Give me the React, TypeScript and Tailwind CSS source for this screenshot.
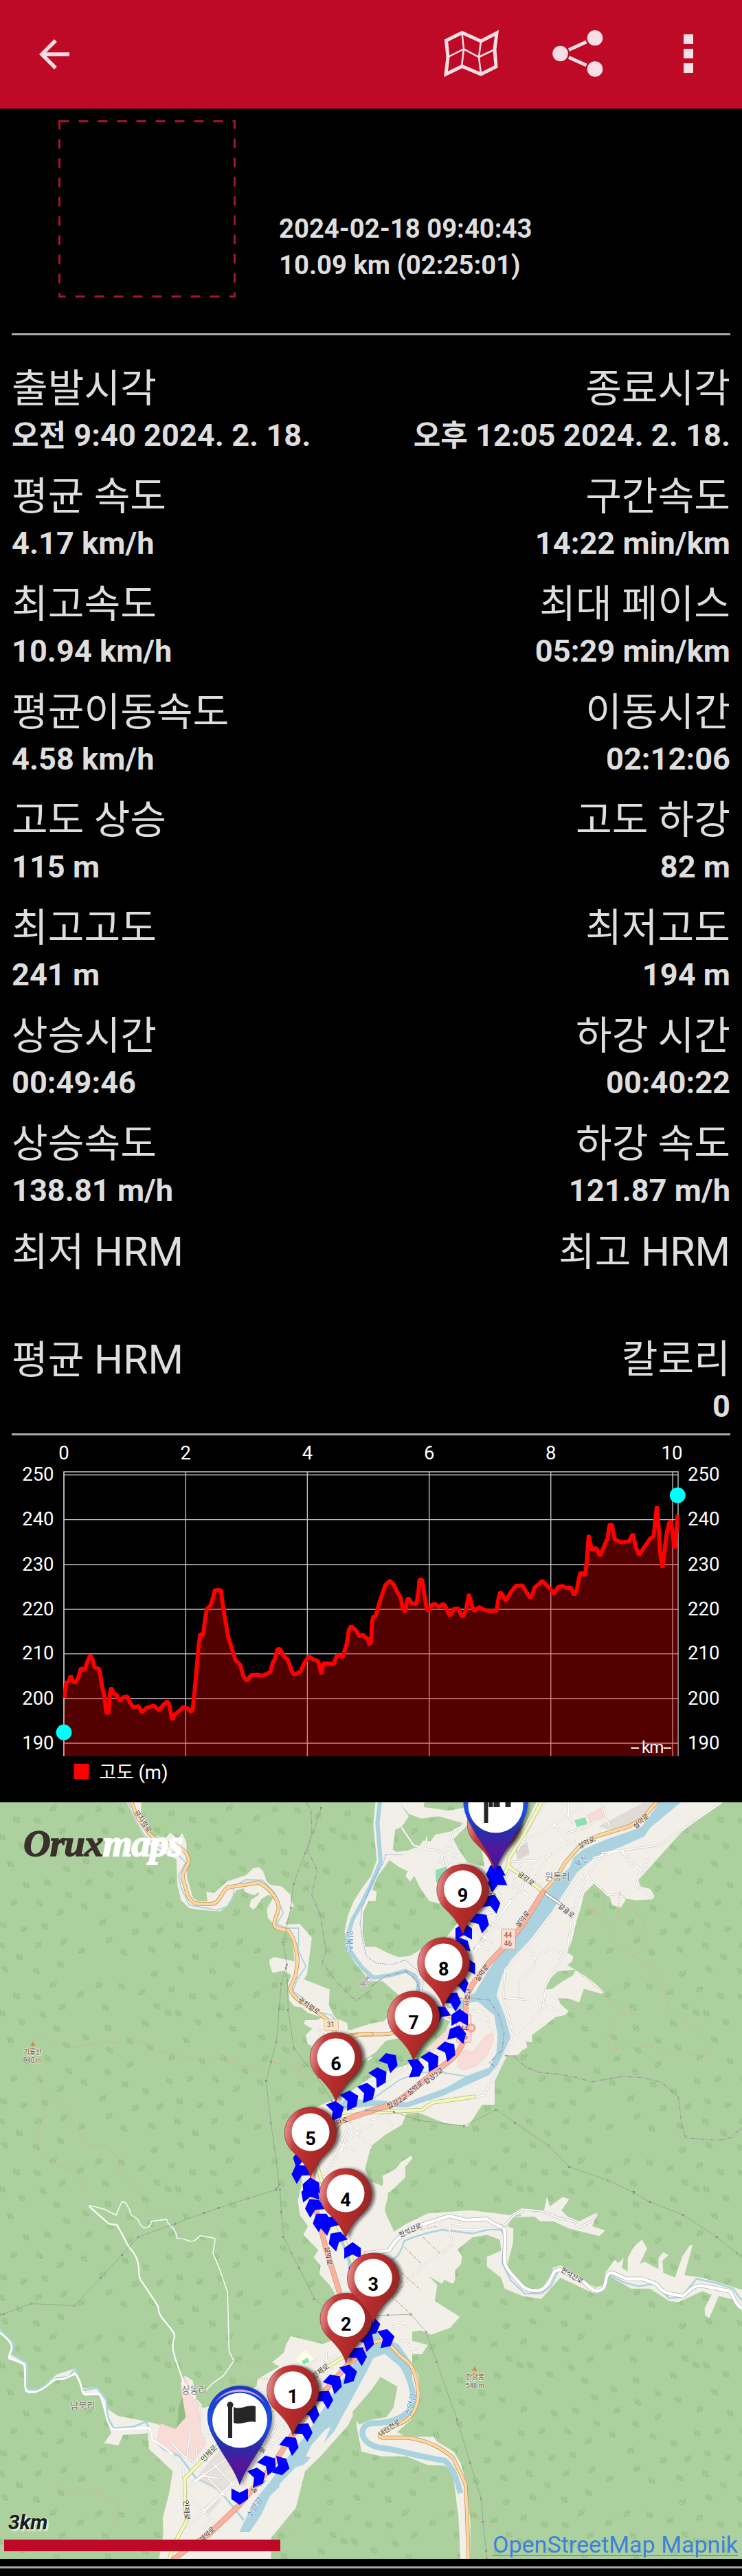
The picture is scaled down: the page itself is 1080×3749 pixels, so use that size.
import type { ReactNode } from 'react'

type Stat = { label: string; latin?: string; prefix?: string; value: string }

const STATS: [Stat, Stat][] = [
  [{ label: '출발시각', prefix: '오전', value: ' 9:40 2024. 2. 18.' }, { label: '종료시각', prefix: '오후', value: ' 12:05 2024. 2. 18.' }],
  [{ label: '평균 속도', value: '4.17 km/h' }, { label: '구간속도', value: '14:22 min/km' }],
  [{ label: '최고속도', value: '10.94 km/h' }, { label: '최대 페이스', value: '05:29 min/km' }],
  [{ label: '평균이동속도', value: '4.58 km/h' }, { label: '이동시간', value: '02:12:06' }],
  [{ label: '고도 상승', value: '115 m' }, { label: '고도 하강', value: '82 m' }],
  [{ label: '최고고도', value: '241 m' }, { label: '최저고도', value: '194 m' }],
  [{ label: '상승시간', value: '00:49:46' }, { label: '하강 시간', value: '00:40:22' }],
  [{ label: '상승속도', value: '138.81 m/h' }, { label: '하강 속도', value: '121.87 m/h' }],
  [{ label: '최저', latin: ' HRM', value: '' }, { label: '최고', latin: ' HRM', value: '' }],
  [{ label: '평균', latin: ' HRM', value: '' }, { label: '칼로리', value: '0' }],
]

function Header() {
  return (
    <header className="flex h-[158px] items-center bg-[#be0a26] pr-[71px] pl-[46px] text-[#f9dfe4]">
      <svg className="size-[66px]" viewBox="0 0 24 24" fill="currentColor">
        <path d="M20 11H7.83l5.59-5.59L12 4l-8 8 8 8 1.41-1.41L7.83 13H20v-2z" />
      </svg>
      <div className="ml-auto flex items-center pb-[2px]">
        <svg className="h-[68px] w-[80px]" viewBox="645 44 80 68" fill="none" stroke="currentColor">
          <path strokeWidth="5" d="M648.5 59 671.5 47.5 699 60 722 48 719 72 721 97 699 108 671.5 96.500 648 108 651 83Z" />
          <path strokeWidth="2.5" d="M671.500 48 674 71.500 671 97M699 60 696 83 699 108M651 83 674 71.500 696 83 719 72" />
        </svg>
        <svg className="ml-[78px] h-[68px] w-[74px]" viewBox="803 44 74 68" fill="currentColor">
          <circle cx="814.500" cy="78" r="11.300" />
          <circle cx="865" cy="55.300" r="11.300" />
          <circle cx="865" cy="100.500" r="11.300" />
          <path d="M827 72.500 852.500 61M827 83.500 852.500 95" stroke="currentColor" strokeWidth="5" />
        </svg>
        <div className="ml-[117px] flex flex-col gap-[7px]">
          <span className="size-[14px] bg-current" />
          <span className="size-[14px] bg-current" />
          <span className="size-[14px] bg-current" />
        </div>
      </div>
    </header>
  )
}

function Summary() {
  return (
    <div className="mx-[17px] flex h-[330px] border-b-3 border-[#a9a9a9] pt-[17px] pl-[68px]">
      <svg className="size-[259px] shrink-0" viewBox="0 0 259 259">
        <rect x="1.5" y="1.5" width="255" height="255" fill="none" stroke="#a8142c" strokeWidth="3" strokeDasharray="14 14" />
      </svg>
      <div className="mt-[132px] ml-[62px] text-[38.25px] leading-[53px] font-bold text-[#dedede]">
        <div>2024-02-18 09:40:43</div>
        <div>10.09 km (02:25:01)</div>
      </div>
    </div>
  )
}

function StatCell({ stat }: { stat: Stat }) {
  return (
    <div>
      <div className="h-24 text-[57.3px] leading-[99px]">
        {stat.label}
        {stat.latin && <span className="text-[59px] whitespace-pre">{stat.latin}</span>}
      </div>
      <div className="h-[61px] text-[45.2px] leading-[43px] font-bold whitespace-pre">
        {stat.prefix && <span className="text-[43px]">{stat.prefix}</span>}
        {stat.value}
      </div>
    </div>
  )
}

const PROFILE =
  '273,1135 279,1072 290,1068 299,1042 307,1062 318,1072 330,1052 342,1010 357,1018 370,980 382,955 392,975 399,1006 420,1014 430,1080 442,1135 448,1195 460,1200 464,1120 470,1092 480,1115 495,1125 505,1148 522,1133 540,1130 548,1155 565,1175 585,1170 601,1197 618,1178 650,1168 672,1188 690,1165 708,1150 716,1165 724,1210 729,1228 738,1205 755,1193 775,1174 793,1180 808,1195 815,1180 825,1080 838,930 846,865 858,872 866,810 874,760 890,745 898,720 908,680 934,680 940,730 950,795 965,880 978,920 995,975 1015,995 1028,1042 1044,1064 1060,1040 1085,1038 1110,1042 1143,1026 1153,985 1163,970 1172,930 1183,928 1200,960 1217,975 1232,1020 1243,1038 1270,1024 1285,990 1305,960 1325,973 1345,980 1352,1010 1359,1035 1366,990 1380,990 1410,992 1425,955 1448,962 1466,905 1475,845 1485,832 1505,850 1518,875 1533,868 1545,880 1555,885 1561,912 1568,900 1573,810 1578,793 1588,790 1603,735 1628,660 1648,640 1665,658 1680,690 1694,712 1703,760 1713,772 1720,725 1726,712 1738,735 1760,738 1768,690 1773,635 1784,636 1794,700 1803,755 1811,768 1826,742 1838,738 1855,750 1874,738 1886,755 1901,788 1918,760 1938,758 1948,785 1958,792 1970,760 1982,697 1993,740 2003,768 2026,752 2043,762 2068,768 2098,768 2106,720 2114,688 2124,700 2138,726 2158,690 2180,662 2208,660 2223,685 2240,713 2250,700 2260,668 2278,655 2291,640 2308,657 2326,675 2343,695 2358,668 2376,662 2393,670 2414,670 2426,702 2438,680 2445,640 2453,605 2472,618 2480,560 2488,448 2500,508 2520,502 2536,535 2553,495 2568,460 2576,405 2586,402 2598,465 2623,478 2658,474 2675,442 2688,500 2701,532 2726,494 2748,462 2763,452 2770,380 2776,326 2783,400 2790,520 2800,585 2808,520 2816,450 2828,395 2836,388 2844,450 2850,502 2855,490 2864,362'

const ELEVATIONS: [number, number][] = [[250, 193], [240, 382], [230, 572], [220, 761], [210, 949], [200, 1138], [190, 1327]]
const DISTANCES: [number, number][] = [[0, 270], [2, 785], [4, 1299], [6, 1814], [8, 2328], [10, 2843]]

function ElevationChart() {
  return (
    <svg className="block h-[534px] w-full" viewBox="0 26 3136 1550.6" fontSize="79.800" fill="#fff">
      {DISTANCES.map(([km, x]) => (
        <text key={km} x={km === 10 ? 2840 : x} y="128" textAnchor="middle">{km}</text>
      ))}
      <g stroke="#c4c4c4" strokeWidth="4">
        <path d="M268 180H2868M270 180V1382M2866 180V1382" />
        {ELEVATIONS.map(([m, y]) => <path key={m} d={`M270 ${y}H2866`} />)}
        {DISTANCES.map(([km, x]) => <path key={km} d={`M${x} 180V1382`} />)}
      </g>
      {ELEVATIONS.map(([m, y]) => (
        <g key={m}>
          <text x="228" y={y + 25} textAnchor="end">{m}</text>
          <text x="2907" y={y + 25}>{m}</text>
        </g>
      ))}
      <polygon points={`270,1382 ${PROFILE} 2866,1382`} fill="#f00" fillOpacity=".32" />
      <polyline points={PROFILE} fill="none" stroke="#f00" strokeWidth="17" strokeLinejoin="bevel" />
      <text x="2666" y="1367" fontSize="70" textLength="172">-- km--</text>
      <circle cx="270" cy="1281" r="33" fill="#0ff" />
      <circle cx="2864" cy="279" r="33" fill="#0ff" />
      <rect x="312" y="1414" width="64" height="64" fill="#f00" />
      <text x="418" y="1477"><tspan fontSize="80">고도</tspan> (m)</text>
    </svg>
  )
}

// survey sheets: every sheet keeps its own coordinates
const NW = 'translate(0 -3) scale(.34439 .36352)'
const NE = 'translate(540 -3) scale(.34439 .36352)'
const SW = 'translate(0 567) scale(.34439 .35651)'
const SE = 'translate(540 567) scale(.34439 .35651)'
const N = 'translate(380 -3) scale(.33333)'
const S = 'translate(260 417) scale(.33333 .40816)'

// x, y, mirrored
const TREES: [number, number, number][] = [
  [226, 32, 1], [418, 35, 1], [513, 40, 0], [725, 52, 1], [69, 79, 0], [157, 82, 0], [340, 72, 1], [601, 63, 1], [264, 123, 1],
  [444, 124, 0], [664, 120, 0], [9, 148, 0], [93, 183, 0], [181, 155, 0], [613, 188, 0], [710, 146, 0], [239, 210, 0], [456, 207, 0],
  [362, 244, 0], [549, 258, 0], [43, 255, 0], [281, 275, 0], [464, 295, 0], [635, 285, 0], [201, 329, 0], [377, 327, 1], [727, 323, 1],
  [110, 340, 0], [549, 353, 1], [290, 379, 0], [453, 383, 0], [60, 410, 1], [168, 413, 0], [355, 425, 0], [528, 432, 0], [714, 418, 0],
  [256, 450, 1], [615, 459, 0], [14, 500, 0], [435, 488, 1], [189, 505, 0], [101, 516, 1], [572, 527, 1], [676, 521, 1], [461, 560, 1],
  [270, 567, 1], [163, 579, 1], [5, 581, 0], [345, 602, 1], [522, 609, 0], [641, 599, 0], [81, 627, 0], [256, 658, 0], [20, 676, 0],
  [153, 684, 0], [653, 695, 1],
]

function Tree({ x, y, flip }: { x: number; y: number; flip: number }) {
  return (
    <path
      transform={`translate(${x} ${y}) scale(${flip ? -1 : 1} 1)`}
      d="M-7-13C-14-13-14 2-7 2S0-13-7-13ZM-7-5V11M7-10 0 8H14ZM7 8V14"
    />
  )
}

function Forest() {
  return (
    <>
      <defs>
        <pattern id="wood" width="256.200" height="256.300" patternUnits="userSpaceOnUse" patternTransform="translate(0 2.8)">
          <rect width="257" height="257" fill="#add19e" />
          <g transform="translate(0 -5.8) scale(.34439 .36352)" fill="none" stroke="#8ab77e" strokeWidth="2.600">
            {TREES.map(([x, y, f]) => <Tree key={`${x}-${y}`} x={x} y={y} flip={f} />)}
            {TREES.filter(([x]) => x < 25).map(([x, y, f]) => <Tree key={`w${x}-${y}`} x={x + 744} y={y} flip={f} />)}
          </g>
        </pattern>
        <mask id="land" maskUnits="userSpaceOnUse" x="0" y="0" width="1080" height="1101">
          <rect width="1080" height="1101" fill="#fff" />
          <g fill="#000">
            <path transform={NW} d="M532 0 560 60 600 130 640 190 700 215 745 235 750 340 765 400 800 432 860 440 930 445 960 425 985 380 1000 360 1030 352 1035 368 1075 380 1092 368 1094 378 1060 400 1055 425 1070 438 1085 425 1105 395 1135 378 1155 390 1128 435 1132 470 1160 500 1170 520 1215 530 1235 560 1245 645 1160 628 1138 638 1140 660 1153 692 1195 682 1232 700 1217 730 1222 800 1245 825 1275 830 1300 850 1360 870 1340 880 1290 880 1283 895 1320 915 1292 940 1300 975 1350 1000 1410 1060 1568 1080 1568 915 1470 920 1468 892 1415 870 1390 820 1393 757 1285 717 1298 695 1318 550 1267 495 1205 497 1230 440 1242 420 1230 400 1228 378 1190 345 1145 340 1128 325 1112 285 1095 268 1070 272 1040 300 960 325 905 372 872 366 877 405 840 405 815 390 790 310 788 170 770 132 750 155 720 130 700 150 640 140 612 70 595 60 598 0Z" />
            <path transform={N} d="M500 0 490 110 505 260 480 330 430 400 405 440 380 500 365 570 372 640 410 710 455 765 470 790 530 790 600 850 600 925 570 930 535 965 480 975 400 1000 440 1080 450 1140 350 1290 330 1330 1020 1330 1020 0Z" />
            <path transform={NE} d="M500 0H1490L1400 65 1310 130 1210 235 1130 320 1140 345 1180 355 1198 385 1190 397 1120 400 1080 395 1055 430 1020 420 1010 390 985 372 945 330 900 375 890 420 870 480 850 560 830 610 855 625 850 645 830 660 900 700 950 735 985 768 975 775 900 755 880 810 840 795 790 792 800 815 835 845 820 860 780 868 730 905 680 940 680 970 655 965 660 990 640 1000 620 1020 575 1022 545 1080 490 1190 410 1305 310 1292 200 1250 150 1255 130 1300 60 1340 0 1385-60 1600H-280V1250L0 1130Z" />
            <path transform={NE} d="M170 1422 175 1435 145 1465 145 1510 80 1568H45L55 1510 100 1485 125 1450Z" />
            <path transform={S} d="M640 60 600 180 515 230 540 330 520 400 530 450 565 490 545 520 610 575 590 600 620 630 615 660 660 700 690 740 640 790 720 880 630 910 490 882 470 910 460 940 408 975 440 990 345 1035 340 1060 230 1110 100 1140 100 1568 330 1568 480 1420 620 1310 740 1200 820 1060 880 1010 960 1040 1020 1120 1020 560 940 510 890 465 915 380 895 345 890 310 940 290 1000 250 1018 240 1000 270 960 290 900 350 840 330 815 290 820 215 900 160 1020 60Z" />
            <path transform={SW} d="M0 560 50 610 40 660 110 700 105 800 160 815 240 745 320 720 350 800 410 797 440 830 460 890 500 915 620 937 740 968 785 920 770 835 765 780 780 750 815 770 830 850 850 880 900 885 1200 850 1300 1100 1250 1290 1147 1410 1145 1500H672L690 1400 688 1330 715 1230 730 1140 630 1050 625 985 520 992 500 1035 440 1025 470 985 420 830 355 830 318 745 240 765 150 822 105 815 100 710 35 675 50 625 0 575Z" />
            <path transform={SE} d="M-60 0H75L50 50 65 95 98 162 150 130 240 88 380 78 420 75 590 95 640 65 730 80 745 15 755 60 810 20 838 30 805 75 830 100 880 120 960 82 935 140 990 158 965 180 840 150 770 120 715 120 690 100 600 105 575 140 602 150 600 210 575 300 620 370 680 400 720 395 760 340 770 310 800 300 900 365 950 390 985 380 990 330 1030 277 1045 290 1068 270 1060 310 1085 325 1085 270 1110 225 1145 195 1167 230 1135 295 1155 285 1215 315 1215 270 1235 247 1258 258 1232 280 1235 330 1285 350 1315 265 1350 215 1358 220 1325 340 1400 350 1568 400V490L1530 440 1470 425 1430 515 1412 505 1410 475 1440 420 1400 405 1300 450 1260 445 1180 395 1100 395 1010 345 990 400 950 418 800 350 720 437 640 425 565 395 550 350 490 305 490 265 550 240 545 195 490 175 430 185 365 235 385 265 380 295 355 320 355 360 345 375 310 358 300 375 245 345 280 380 270 445 375 510 335 555 255 583 210 565 155 575 155 603 240 625 215 663 150 660 200 750 210 840 170 930 110 980 150 1000H265L280 1020 350 1060 380 1110 405 1200 420 1350V1500H378L370 1330 345 1140 310 1117 240 1115 150 1080H45L-40 1060-60 960Z" />
          </g>
          <g fill="#fff">
            <path transform={N} d="M560 262 600 290 640 310 630 330 650 355 670 330 690 375 735 440 775 450 840 455 870 520 800 610 760 650 700 650 650 680 600 685 560 670 500 640 455 640 443 580 445 490 470 440 500 440 505 400 485 390 510 330 540 290ZM605 12 645 60 700 80 775 70 880 100 860 130 760 150 740 180 710 175 690 200 640 220 590 225 575 215 585 130 615 115 645 70ZM715 0 710 30 820 45 900 30 910 0ZM840 170 900 110 960 180 975 290 900 270 860 210ZM440 1140 500 1100 545 1050 700 1020 790 950 825 965 780 1060 700 1130 620 1160 560 1180 480 1210 450 1230 350 1300Z" />
            <path transform={NE} d="M610 0 700 5 650 100 560 200ZM740 757 745 725 790 685 865 678 855 700 810 725 765 755Z" />
            <path transform={SE} d="M40 755 112 795 95 880 65 920 0 930-50 950-80 900 0 810Z" />
          </g>
        </mask>
      </defs>
      <rect width="1080" height="1101" fill="#f2efe9" />
      <rect width="1080" height="1101" fill="url(#wood)" mask="url(#land)" />
    </>
  )
}

function Water() {
  return (
    <g fill="none" stroke="#aad3df" strokeLinejoin="round">
      <path transform={NE} stroke="none" fill="#aad3df" d="M1225 0 1145 105 1090 125 1000 155 900 195 855 230 840 270 800 300 740 370 640 510 560 590 490 690 440 770 400 790 320 830 380 840 420 810 450 805 520 860 535 940 530 1010 500 1070 400 1105 320 1150 150 1210 0 1200-110 1195-150 1240 0 1225 150 1230 300 1185 500 1100 535 1060 590 950 565 860 530 780 555 700 590 640 680 550 760 450 830 350 870 290 950 225 1060 185 1155 145 1180 110 1320 0Z" />
      <path transform={N} strokeWidth="18" d="M520 0 508 100 515 180 522 270 480 370 440 450 400 520 375 600 390 660 440 730 490 775 560 765 630 745 670 765 688 800 685 840" />
      <path transform={S} stroke="none" fill="#aad3df" d="M840 850 900 890 960 910 1020 980 1020 1080 980 1000 900 945 850 960 820 1010 740 1130 680 1220 560 1330 440 1420 400 1450 360 1520 310 1580H265L330 1470 400 1400 480 1310 560 1230 640 1130 690 1060 740 1010 790 950Z" />
      <path transform={S} strokeWidth="20" d="M690 430 715 540 745 600 760 690" />
      <path transform={SE} strokeWidth="24" d="M80 655C140 690 175 780 180 850 170 920 80 945 0 945-60 955-50 1040 60 1047 120 1055 200 1080 310 1097 350 1125 365 1180 378 1230 400 1350 390 1500" />
      <path transform={S} stroke="none" fill="#f2efe9" d="M665 1205 640 1215 580 1270 555 1310 580 1315 630 1270ZM545 1340 510 1350 440 1410 440 1430 490 1410Z" />
      <g strokeWidth="5">
        <path transform={NW} d="M540 0 560 60 610 140 670 190 750 215 785 250 755 300 765 350 800 420 860 430 920 440 960 425 985 390 990 345 1040 318 1110 320 1160 370 1198 450 1170 495 1210 512 1262 512 1262 550 1260 600 1293 665 1255 720 1238 765 1280 790 1330 845 1400 860 1415 880" />
        <path transform={NE} d="M0 1200 120 1120 200 1090 300 1090 400 1105" />
        <path transform={SW} strokeWidth="8" d="M0 565 65 625 45 660 115 700 115 805 160 810 240 760 290 755 318 722 350 810 410 800 450 850 455 920 480 965 560 960 620 937 640 1000 690 1050 760 1080 830 1170 920 1210 980 1280 1030 1340" />
        <path transform={SE} strokeWidth="7" d="M60 285C100 275 120 270 140 200 200 175 250 165 300 155L430 170 500 153 550 155 565 180 555 290 590 360 650 415 720 415 760 385 790 325 830 320 900 365 950 415 985 405 1010 340 1070 370 1130 385 1200 375 1260 435 1310 430 1375 355 1450 370 1530 395 1568 445M575 125 600 100 635 95" />
      </g>
      <g fill="#f7dcd7" stroke="#f0b8b2" strokeWidth="2" strokeOpacity=".7">
        <path transform={SW} d="M780 755 770 835 785 920 740 968 680 945 665 1010 690 1045 780 1080 810 1105 870 1030 850 960 835 860Z" />
        <path transform={NE} d="M370 1030 395 1000 430 1010 485 945 515 930 518 960 490 1020 440 1065 390 1080 365 1065ZM230 1000 330 910 340 950 260 1005ZM915 60 985 25 990 65 930 95Z" />
      </g>
      <path transform={NE} stroke="none" fill="#8edfb6" d="M860 80 905 68 915 95 870 108ZM272 280 320 265 325 330 275 330Z" />
      <path transform={SW} stroke="none" fill="#ffffe5" d="M1290 645 1325 680 1285 715 1250 685ZM945 1140 1000 1120 1010 1170 975 1190Z" />
      <path transform={SW} stroke="none" fill="#8edfb6" d="M1275 690 1300 677 1308 692 1284 706Z" />
      <path transform={SW} stroke="none" fill="#8cb57c" fillOpacity=".8" d="M770 835 785 920 740 968 750 945 755 880Z" />
    </g>
  )
}

// built-up blocks
function Blocks() {
  return (
    <g fill="#dcd6d2">
      <path transform={NE} d="M960 105 1150 10 1200 10 1140 75 1090 98 1005 118Z" fillOpacity=".8" />
      <path transform={NE} d="M610 200 660 165 670 215 620 240ZM470 520 490 505 495 525 475 540ZM460 550 480 540 485 560 465 570ZM500 500 515 490 520 505 505 515ZM430 590 450 580 452 600 435 605Z" />
      <path transform={SW} d="M860 1130 930 1050 1010 1110 1080 1080 1100 1100 930 1230 830 1170ZM860 1290 920 1240 935 1260 880 1320Z" fillOpacity=".6" />
    </g>
  )
}

const TRACKS: [string, string][] = [
  [NW, 'M1340 960 1390 900M1345 970 1380 930 1350 920M1568 1030 1555 1040'],
  [NW, 'M1440 1270 1568 1390M1400 1450 1480 1290M1500 1270 1430 1420M1568 1300 1480 1350 1430 1420 1370 1500M1420 1370 1500 1400'],
  [NE, 'M130 110 180 180 230 195 290 200 310 260 370 265M230 195 235 150M290 250 320 190 350 200 380 260M310 230 330 270 350 230M420 90 350 120 330 190'],
  [NE, 'M730 10 670 110 620 200M770 100 830 60 890 30M830 160 780 100 700 140 640 160M835 10 835 65 850 90M830 130 905 110 960 75M975 15 1010 110M600 245 700 240 780 210 860 165M600 250 560 330 700 400M640 240 600 330 690 400M690 240 640 340M740 240 680 330M590 290 740 350M560 330 470 460 550 440M620 370 540 470M590 400 430 620M550 380 440 520M440 520 510 570M480 480 560 520M450 580 500 600M420 640 460 560'],
  [NE, 'M1480 10 1220 180 1060 200 980 210 900 330 850 450 830 600 800 640 740 740 725 830 660 910 600 960 530 1080 480 1180 435 1190M890 300 650 590 565 680 560 790 665 800M665 580 695 630 690 660 625 730 625 790M695 630 760 590 805 610M725 820 790 840M605 950 565 800M940 230 1060 200 1140 280 1120 340 1190 390M880 300 920 310 1000 380 1080 370M430 840 480 850 510 920M0 1120 160 1060 300 1000M20 1150 150 1070M1060 205 1100 260 1150 280 1170 240'],
  [NE, 'M0 1280 80 1260M50 1260 90 1300'],
  [SW, 'M790 1230 860 1300 930 1380M860 1300 1000 1170M770 1390 1000 1180M800 1200 860 1160 930 1170M820 1180 960 1090M860 1150 950 1240M900 1110 990 1200M860 1370 900 1340M830 850 850 870 850 960 860 1000 880 990M720 1020 780 1080 830 1110M805 975 790 1080M830 1040 835 1110M1150 880 1230 980M1170 940 1100 1080M1150 1000 1200 960M1130 1040 1190 1010M1100 1050 1160 1090M1200 930 1130 1010M1310 700 1350 680 1400 720M1380 660 1380 690 1420 670M735 1080 775 1130 775 1170'],
  [SE, 'M285 130 290 145 330 150 430 155 500 148 555 145M330 150 345 210 300 250 230 295 150 365M350 100 340 130 385 135 375 105M100 600 150 610 170 645 190 640M90 550 110 545 150 550'],
]

function Roads() {
  const sec: [string, string][] = [
    [NE, 'M725 0 650 130 585 230 580 260 560 310 480 400 410 520 390 560 300 850M580 265 650 310 735 370M-150 1270 0 1250 215 1240 260 1210 435 1187'],
    [SW, 'M1450 675 1340 740 1240 820 1150 890 920 1040 845 1105 780 1170 782 1290 790 1340 740 1430 715 1500'],
    [S, 'M590 230 625 330 690 480 750 590 790 700 860 850 890 890'],
  ]
  const prim: [string, string][] = [
    [NE, 'M1215 0 1145 75 1090 105 950 145 880 185 820 250 790 300 725 370M-120 950C-60 930 0 940 80 935L200 880 300 850 340 870'],
    [NW, 'M555 0 575 60 620 120C650 165 700 170 750 185 790 205 800 225 797 250 785 275 770 290 772 310L790 370C800 400 820 415 840 415H890C930 415 930 375 960 350L1000 343 1095 330C1130 345 1175 390 1178 430 1175 455 1155 480 1160 500 1165 515 1190 517 1215 520 1245 545 1250 590 1258 640L1250 700 1228 750C1225 780 1260 800 1330 840L1385 880 1415 930 1420 980M1450 975C1500 930 1540 935 1570 937'],
    [SE, 'M-20 620 55 605 75 620 130 675C170 700 190 730 200 820 200 870 180 930 110 950L50 980C30 990 35 1003 50 1003H150C220 1010 300 1040 350 1090 370 1140 395 1170 400 1200L405 1290 412 1500'],
  ]
  const trunk: [string, string][] = [
    [NE, 'M727 368 640 500 590 560 500 650C440 720 400 760 400 830V940C380 1010 350 1035 270 1085L190 1150 100 1215 0 1243-140 1290'],
    [S, 'M700 122 640 200 600 260C570 340 590 380 600 430L640 560 700 720 745 850'],
    [SW, 'M1568 620 1460 715 1340 850 1230 1000 1150 1120 1010 1280 880 1400 800 1450 735 1500'],
  ]
  const white: [string, string][] = [
    [SE, 'M-20 250C40 245 70 240 78 238 95 205 120 180 180 145L330 98 400 115 490 110C520 135 545 140 560 145 575 180 560 240 565 290 580 330 610 350 640 385 670 410 720 410 740 385 770 350 765 315 800 318L900 368C930 395 950 420 980 395 1000 370 985 330 1020 330L1080 355 1145 355 1205 375C1240 420 1260 415 1320 425 1350 400 1360 380 1400 383L1515 405C1540 430 1530 455 1575 480'],
  ]
  return (
    <g fill="none" strokeLinejoin="round" strokeLinecap="round">
      {TRACKS.map(([t, d], i) => (
        <g key={i} transform={t}>
          <path d={d} stroke="#c6c3bf" strokeWidth="8" />
          <path d={d} stroke="#fff" strokeWidth="5" />
        </g>
      ))}
      <g transform={SW} stroke="#fff">
        <path strokeWidth="6" d="M378 60 460 130 495 135 545 225C600 280 580 320 592 355L650 440 670 470C660 510 740 560 738 590 715 650 750 690 775 780L825 840" />
        <path strokeWidth="4" d="M378 55 440 70 490 95 515 40C540 40 535 60 550 75 545 110 580 90 590 130 620 170 640 130 640 120L705 112C705 140 745 140 748 190 790 180 800 230 845 178L910 190 900 250 930 320 962 410 968 650 988 690 945 750 900 780 870 810" />
        <path strokeWidth="7" d="M0 575C90 640 30 650 38 680L100 700C120 740 90 800 120 818 190 820 210 770 240 765 300 770 315 720 330 760 350 790 340 820 360 828L420 825C450 860 440 950 480 970L630 963 645 1010 730 1070" />
      </g>
      {white.map(([t, d], i) => (
        <g key={i} transform={t}>
          <path d={d} stroke="#aaa" strokeWidth="17" />
          <path d={d} stroke="#fff" strokeWidth="13" />
        </g>
      ))}
      <path transform={SE} d="M560 142 600 100 650 72 720 78 790 105 860 122 880 145 940 115 955 92" stroke="#aaa" strokeWidth="9" />
      <path transform={SE} d="M560 142 600 100 650 72 720 78 790 105 860 122 880 145 940 115 955 92" stroke="#fff" strokeWidth="6" />
      {sec.map(([t, d], i) => (
        <g key={i} transform={t}>
          <path d={d} stroke="#b5b878" strokeWidth="16" />
          <path d={d} stroke="#f5f8bc" strokeWidth="12" />
        </g>
      ))}
      {prim.map(([t, d], i) => (
        <g key={i} transform={t}>
          <path d={d} stroke="#b98c45" strokeWidth="16" />
          <path d={d} stroke="#fcd6a4" strokeWidth="12" />
        </g>
      ))}
      {trunk.map(([t, d], i) => (
        <g key={i} transform={t}>
          <path d={d} stroke="#d98a74" strokeWidth="23" />
          <path d={d} stroke="#f9b29c" strokeWidth="19" />
        </g>
      ))}
      <path transform={NE} d="M738 374 800 415" stroke="#777" strokeWidth="12" />
      <path transform={NE} d="M738 374 800 415" stroke="#fff" strokeWidth="8" />
    </g>
  )
}

const POWER: [string, string][] = [
  [NW, '1357,32 1325,125 1290,210 1241,334 1229,430 1197,573 1212,658 1189,735 1180,835 1168,967 1145,1047 1125,1124 1145,1294 1160,1390 1180,1542 1168,1555'],
  [NW, '1209,670 1215,725 1218,840 1242,994 1343,1112 1403,1203'],
  [SW, '0,502 15,498 129,456 315,464 425,352 515,257 585,184 739,130 863,86 924,66 1046,27 1165,-8'],
  [SW, '1183,-10 1189,83 1198,184 1232,251 1264,310 1328,436 1390,485'],
  [NE, '-20,1240 97,1248 204,1282 393,1304 529,1239 608,1291 750,1382 837,1467 1003,1522 1110,1570'],
  [SE, '1110,3 1180,41 1319,94 1461,184 1546,250 1575,272'],
  [SE, '10,505 71,503 169,500 233,571 277,694 364,930 419,1106 466,1252 474,1348 487,1465 490,1500'],
]

function Lines() {
  return (
    <g fill="none">
      {POWER.map(([t, pts], i) => (
        <g key={i} transform={t} stroke="#8b9a86">
          <polyline points={pts} strokeWidth="2" />
          {pts.split(' ').map((p) => {
            const [x, y] = p.split(',').map(Number)
            return <rect key={p} x={x - 3} y={y - 3} width="6" height="6" fill="#ddd" stroke="#777" strokeWidth="2" />
          })}
        </g>
      ))}
      <g stroke="#a393a2" strokeWidth="4" strokeDasharray="16 5 4 5 4 5">
        <path transform={NW} d="M1295 8 1315 40 1318 130 1300 200 1340 280 1318 380 1355 460 1370 560 1380 600 1362 650 1400 700 1435 740 1505 803 1568 760" />
        <path transform={NE} d="M520 1065 500 1050 555 1000 562 930 540 860 500 800 400 790 330 800M565 1022 605 1025 650 1065 710 1090 780 1095 870 1110 930 1128 1060 1106 1150 1110 1230 1130 1300 1190 1312 1290 1330 1352 1470 1362 1520 1350 1568 1310M0 745 60 705 150 685 190 720 205 760" />
      </g>
      <g stroke="#dba584" strokeWidth="3" strokeDasharray="4 6">
        <path transform={NW} d="M140 960 190 955 245 980 310 990 460 967 520 975 600 962 650 1000 790 1030 930 1035 1010 1060 1090 1075 1130 1045 1200 1055 1270 1090 1340 1128M1270 1090 1270 1040 1310 1030M125 1060 150 1130 185 1180 187 1270 162 1310 165 1400 220 1455 290 1480 305 1455 330 1490 350 1568M185 1165 210 1170 280 1235 320 1310 380 1385 440 1380 500 1430 505 1490 590 1568" />
        <path transform={NE} d="M890 425 905 370 980 355 985 460 920 430 1010 500 1010 550 1220 700 1260 830 1415 950 1410 1030 1330 1010 1180 985 1010 995 1000 950 1030 860 1110 855 1110 830 1030 820 980 770 880 690M1045 465 1050 370 1090 410 1150 480 1170 590 1220 700M1045 465 1160 550" />
        <path transform={SW} d="M595 0 630 80 730 90 765 190M910 190 935 240 920 290M985 690 1050 695 1150 715M940 760 1080 780 1090 760 1150 765M295 1105 260 1160 265 1220 310 1230 400 1215 500 1280 490 1340 460 1410M1260 1375 1190 1375 1165 1440" />
        <path transform={SE} d="M430 1310 470 1350 530 1370 560 1410 640 1430" />
      </g>
      <path transform={SE} d="M130 180 200 155 280 140M140 225 210 290M220 185 290 250M130 330 210 400M70 300 140 380 90 430 170 500" stroke="#cda265" strokeWidth="3" strokeDasharray="12 6 4 6" />
      <path transform={N} d="M620 238 545 236 535 270 490 350 440 470 432 540 445 620 460 680 500 710 570 718 630 698 680 740 708 790 705 830" stroke="#5a55e8" strokeWidth="3" strokeDasharray="3 5" />
    </g>
  )
}

// sheet, x, y, rotation, text, colour, size
const PLACES: [string, number, number, number, string, string, number][] = [
  [NW, 596, 90, 55, '광치령로', '#4a3b1c', 28],
  [NW, 1300, 832, 33, '광치령로', '#4a3b1c', 28],
  [NW, 1466, 565, 92, '인북천', '#5b93c4', 32],
  [NW, 1552, 735, -45, '북면', '#8d729b', 30],
  [NW, 138, 1017, 0, '기룡산', '#7d5b41', 28],
  [NW, 138, 1050, 0, '940 m', '#7d5b41', 28],
  [NE, 788, 320, 0, '원통리', '#777', 38],
  [NE, 895, 255, -33, '북천', '#5b93c4', 32],
  [NE, 1148, 92, -40, '설악로', '#4a3b1c', 28],
  [NE, 915, 178, -25, '설악로', '#4a3b1c', 28],
  [NE, 650, 322, 35, '금강로', '#333', 28],
  [NE, 820, 450, 37, '갈골로', '#333', 28],
  [NE, 648, 482, -52, '설악로', '#4b2a20', 28],
  [NE, 477, 698, -52, '설악로', '#4b2a20', 28],
  [NE, 418, 790, -85, '서호교', '#4b2a20', 27],
  [NE, 270, 1112, -35, '합강3교', '#4b2a20', 28],
  [NE, 192, 1160, -38, '설악로', '#4b2a20', 28],
  [NE, 115, 1215, -28, '합강2교', '#4b2a20', 28],
  [NW, 1435, 1298, -18, '설악로', '#4b2a20', 28],
  [NW, 1475, 1240, -5, '북천', '#5b93c4', 30],
  [SW, 1378, 262, 82, '설악로', '#4b2a20', 28],
  [SW, 820, 822, 0, '상동리', '#777', 38],
  [SW, 350, 886, 0, '남북리', '#777', 38],
  [SW, 890, 1075, -45, '인제로', '#333', 30],
  [SW, 1360, 740, -35, '인제로', '#333', 30],
  [SW, 778, 1300, 85, '인제로', '#333', 30],
  [SW, 1085, 1295, -55, '소양강', '#5b93c4', 34],
  [SW, 882, 1405, -42, '설악로', '#4b2a20', 28],
  [SW, 1098, 1205, -45, '설악로', '#4b2a20', 28],
  [SW, 1118, 1060, -60, '로', '#333', 28],
  [SE, 170, 165, -25, '한석산로', '#333', 28],
  [SE, 845, 350, 30, '한석산로', '#333', 28],
  [SE, 180, 872, -75, '소양강', '#5b93c4', 34],
  [SE, 82, 972, -32, '내린천로', '#4a3b1c', 28],
  [SE, 440, 766, 0, '한양봉', '#7d5b41', 28],
  [SE, 440, 800, 0, '548 m', '#7d5b41', 28],
]

function PlaceLabels() {
  return (
    <g textAnchor="middle">
      {PLACES.map(([t, x, y, rot, name, color, size], i) => (
        <text key={i} transform={`${t} translate(${x} ${y}) rotate(${rot})`} fontSize={size} fill={color} stroke="#fff" strokeOpacity=".65" strokeWidth="4" paintOrder="stroke">
          {name}
        </text>
      ))}
      <path transform={NW} d="M139 965 150 985H128Z" fill="#cf8d4f" />
      <path transform={SE} d="M438 712 449 732H427Z" fill="#cf8d4f" />
      <g transform={NW}>
        <rect x="1370" y="877" width="60" height="46" rx="5" fill="#f7e4cd" stroke="#d4ae7c" strokeWidth="2" />
        <text x="1398" y="909" fontSize="28" fill="#6b4f22">31</text>
      </g>
      <g transform={NE} fill="#f9dcd5" stroke="#d88f7e" strokeWidth="2">
        <rect x="551" y="515" width="60" height="81" rx="5" />
        <rect x="362" y="857" width="61" height="112" rx="5" />
        <circle cx="424" cy="912" r="14" fill="none" stroke="#f9a08a" strokeWidth="9" />
        <g stroke="none" fill="#8b4334" fontSize="29">
          <text x="579" y="549">44</text>
          <text x="579" y="582">46</text>
          <text x="393" y="924">44</text>
          <text x="393" y="956">46</text>
        </g>
        <text x="514" y="390" stroke="none" fill="#777d3c" fontSize="27">53</text>
      </g>
    </g>
  )
}

// direction arrows along the recorded route: x, y, heading
const ROUTE: [string, [number, number, number][]][] = [
  [SW, [[1013, 1243, 180], [1190, 1120, 105], [1088, 1162, 70], [1135, 1110, 50], [1228, 1030, 40], [1285, 975, 30], [1315, 900, 35], [1372, 842, 30], [1412, 778, 45], [1475, 742, 75], [1515, 665, 30], [1548, 605, 45], [1325, 60, -30], [1310, 5, -10], [1357, 118, -35], [1388, 132, -40], [1422, 195, -45], [1490, 240, 0], [1510, 315, -10]]],
  [NE, [[522, 290, -30], [530, 325, -25], [510, 410, 22], [465, 485, 42], [392, 525, 0], [378, 582, -15], [405, 665, 0], [375, 730, 20], [345, 800, 32], [290, 855, -35], [375, 870, 0], [365, 935, 15], [325, 1000, 50], [255, 1042, 60], [190, 1072, 85], [80, 1045, 45], [35, 1105, 60], [-15, 1168, 70]]],
  [NW, [[1482, 1198, 65], [1420, 1240, 70], [1275, 1430, -20], [1268, 1490, -30], [1315, 1545, -5]]],
  [SE, [[65, 597, 78], [5, 545, 80]]],
]

function Route() {
  return (
    <g fill="#00f">
      {ROUTE.map(([t, arrows]) => (
        <g key={t} transform={t}>
          {arrows.map(([x, y, a]) => (
            <path key={`${x}-${y}`} transform={`translate(${x} ${y}) rotate(${a})`} d="M0-35 35-11V33L0 15-35 33V-11Z" />
          ))}
        </g>
      ))}
    </g>
  )
}

const MILESTONES: [string, number, number][] = [
  ['10', 718, 97], ['9', 673.6, 192.6], ['8', 645.7, 299], ['7', 602, 377], ['6', 489, 437],
  ['5', 452, 546], ['4', 503, 635], ['2', 503.8, 816.500], ['3', 543.3, 758], ['1', 426.3, 921.700],
]

function FlagPin({ x, y, children }: { x: number; y: number; children: ReactNode }) {
  return (
    <g transform={`translate(${x} ${y})`}>
      <path transform="translate(4 1)" d="M0 0C-8-22-20-35-34-60-62-105-33-145 0-145S62-105 34-60C20-35 8-22 0 0Z" fill="#000" opacity=".35" filter="url(#soft)" />
      <path d="M0 0C-8-24-24-42-37-67-64-112-32-145 0-145S64-112 37-67C24-42 8-24 0 0Z" fill="url(#blue)" />
      <path d="M-37-120A45 45 0 0 1 37-120 46 40 0 0 0-37-120Z" fill="#f3c2f5" opacity=".85" />
      <circle cy="-94.500" r="40" fill="#fff" />
      {children}
    </g>
  )
}

function Pins() {
  return (
    <>
      <defs>
        <linearGradient id="red" x1="0" y1=".2" x2="1" y2=".45">
          <stop offset="0" stopColor="#e79a9a" />
          <stop offset=".25" stopColor="#c23a3a" />
          <stop offset=".55" stopColor="#b52b2b" />
          <stop offset="1" stopColor="#962626" />
        </linearGradient>
        <linearGradient id="blue" x1="0" y1="0" x2="0" y2="1">
          <stop offset="0" stopColor="#1b37c9" />
          <stop offset=".4" stopColor="#1d4fe0" />
          <stop offset=".62" stopColor="#2a2ba8" />
          <stop offset=".8" stopColor="#55159b" />
          <stop offset="1" stopColor="#361d9c" />
        </linearGradient>
        <filter id="soft" x="-30%" y="-30%" width="160%" height="160%"><feGaussianBlur stdDeviation="2" /></filter>
      </defs>
      {MILESTONES.map(([n, x, y]) => (
        <g key={n} transform={`translate(${x} ${y})`}>
          <path transform="translate(5 1)" d="M0 0C-4-14-12-25-24-36-52-62-34-103 0-103S52-62 24-36C12-25 4-14 0 0Z" fill="#000" opacity=".55" filter="url(#soft)" />
          <path d="M0 0C-4-14-12-24-24-36-52-61-34-102 0-102S52-61 24-36C12-24 4-14 0 0Z" fill="url(#red)" stroke="#7c1f1f" strokeWidth=".6" />
          <circle cy="-66" r="27.500" fill="#fff" />
          <text y="-47.500" fontSize="27" fontWeight="bold" textAnchor="middle" fill="#000">{n}</text>
        </g>
      ))}
      <FlagPin x={721.5} y={99}>
        <path d="M-17-130H-11V-69H-17ZM-10-100H-4V-92H-10ZM-3-103H6V-92H-3ZM14-101H22V-92H14Z" fill="#262626" />
      </FlagPin>
      <FlagPin x={349} y={994}>
        <circle cx="-14" cy="-117" r="4.600" fill="#262626" />
        <path d="M-17-117H-11V-69H-17ZM-9-114C2-109 10-118 23-115V-92C12-95 2-87-9-91Z" fill="#262626" />
      </FlagPin>
    </>
  )
}

function TrackMap() {
  return (
    <div className="relative h-[1101px] overflow-hidden">
      <svg className="block h-full w-full" viewBox="0 0 1080 1101">
        <Forest />
        <Water />
        <Blocks />
        <Roads />
        <Lines />
        <PlaceLabels />
        <Route />
        <Pins />
      </svg>
      <div className="absolute top-[25px] left-[34px] font-['Liberation_Serif',serif] text-[55px] leading-[70px] font-bold tracking-[-0.9px] text-white italic">
        <span className="text-[#3a2f2b] [-webkit-text-stroke:1.500px_#3a2f2b]">Orux</span>
        <span className="[-webkit-text-stroke:2px_#fff]">maps</span>
      </div>
      <div className="absolute bottom-[11px] left-[6px] w-[402px]">
        <div className="pb-[7px] pl-[6px] text-[30px] leading-[36px] font-bold text-[#1c1c1c] italic [text-shadow:2px_2px_3px_#fff]">3km</div>
        <div className="h-[17px] bg-[#be0a26]" />
      </div>
      <a href="#" className="absolute right-[6px] -bottom-px text-[34.1px] leading-[44px] text-[#3f80dc] underline decoration-1 underline-offset-4">
        OpenStreetMap Mapnik
      </a>
    </div>
  )
}

export default function App() {
  return (
    <div className="flex h-[3749px] w-[1080px] flex-col bg-black font-[Roboto,'Noto_Sans_CJK_KR',sans-serif]">
      <Header />
      <Summary />
      <div className="mx-[17px] h-[1601px] border-b-3 border-[#a9a9a9] pt-[28px] text-[#dedede]">
        {STATS.map(([left, right]) => (
          <div key={left.label + left.latin} className="flex justify-between">
            <StatCell stat={left} />
            <div className="text-right">
              <StatCell stat={right} />
            </div>
          </div>
        ))}
      </div>
      <ElevationChart />
      <TrackMap />
      <div className="mt-[11px] h-[3px] bg-[#a9a9a9]" />
    </div>
  )
}
